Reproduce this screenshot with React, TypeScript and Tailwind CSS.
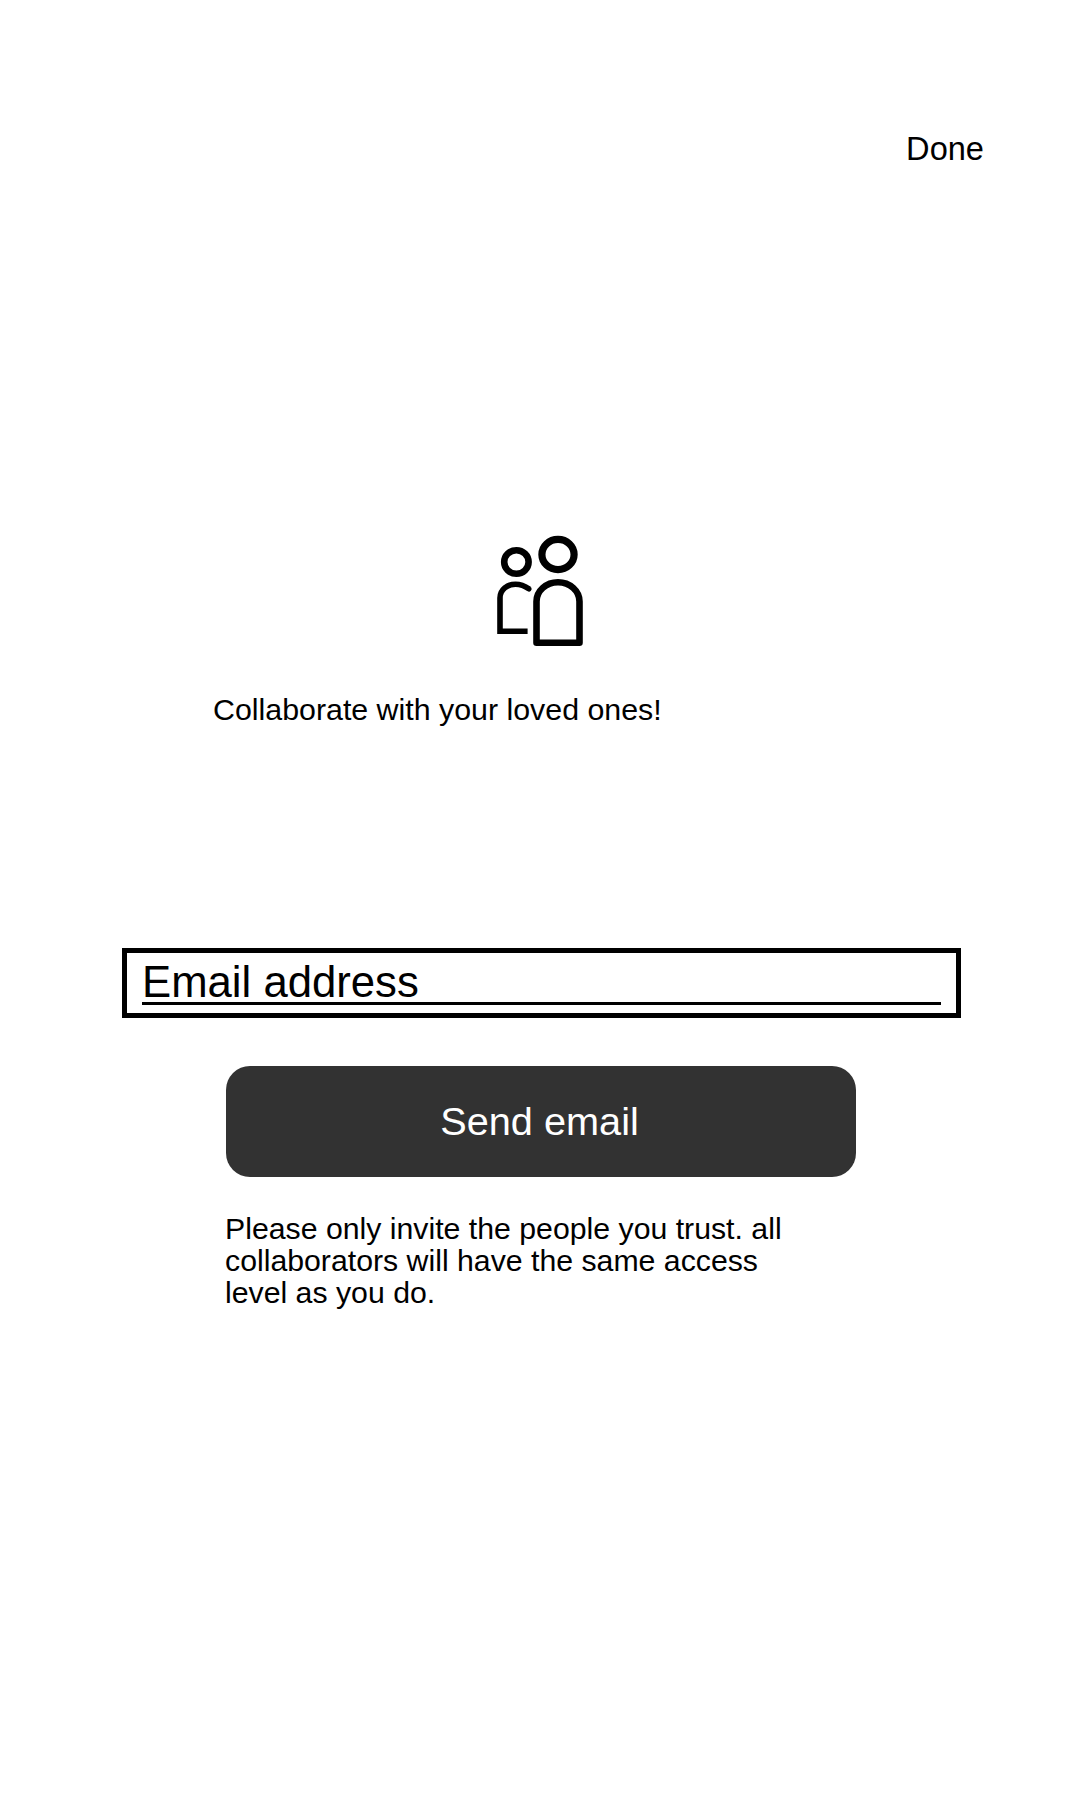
function PeopleIcon() {
  return (
    <svg className="block h-[140px] w-[120px]" viewBox="0 0 120 140" fill="none" stroke="#000" aria-hidden="true">
      <ellipse cx="36.4" cy="42" rx="12.2" ry="11.8" strokeWidth="6.6" />
      <ellipse cx="78" cy="34.5" rx="16.1" ry="15.1" strokeWidth="7.2" />
      <path d="M47.6 111.3H20V78C20 69.5 27.5 64.2 35.5 64.2C41.5 64.2 45.5 66.4 49.2 69" strokeWidth="5.6" />
      <path d="M49 69l0.1 0.1" strokeWidth="5" strokeLinecap="round" />
      <path d="M56.5 122.8V81.5A21.5 19.3 0 0 1 99.5 81.5V122.8Z" strokeWidth="6.6" strokeLinejoin="round" />
    </svg>
  );
}

export default function App() {
  return (
    <main className="flex h-[1800px] w-[1080px] flex-col bg-white font-['Liberation_Sans',Arial,sans-serif] text-black">
      <header className="flex justify-end pt-[131px] pr-[96px]">
        <button className="text-[32.6px] leading-[36px]">Done</button>
      </header>
      <section className="mt-[353px] flex flex-col items-center">
        <PeopleIcon />
        <h1 className="mt-[32px] w-full pl-[213px] text-[30.35px] leading-[36px] whitespace-nowrap">
          Collaborate with your loved ones!
        </h1>
      </section>
      <form className="mt-[220px] flex flex-col">
        <label className="ml-[122px] flex h-[70px] w-[839px] flex-col border-[5px] border-black px-[15px]">
          <span className="h-[52px] border-b-[3px] border-black text-[43.7px] leading-[57px]">Email address</span>
        </label>
        <button
          type="button"
          className="mt-[48px] ml-[226px] h-[111px] w-[630px] rounded-[24px] bg-[#323232] pr-[3px] text-[39.7px] leading-[111px] text-white"
        >
          Send email
        </button>
      </form>
      <p className="mt-[36px] ml-[225px] text-[30.25px] leading-[32px] whitespace-nowrap">
        Please only invite the people you trust. all
        <br />
        collaborators will have the same access
        <br />
        level as you do.
      </p>
    </main>
  );
}
